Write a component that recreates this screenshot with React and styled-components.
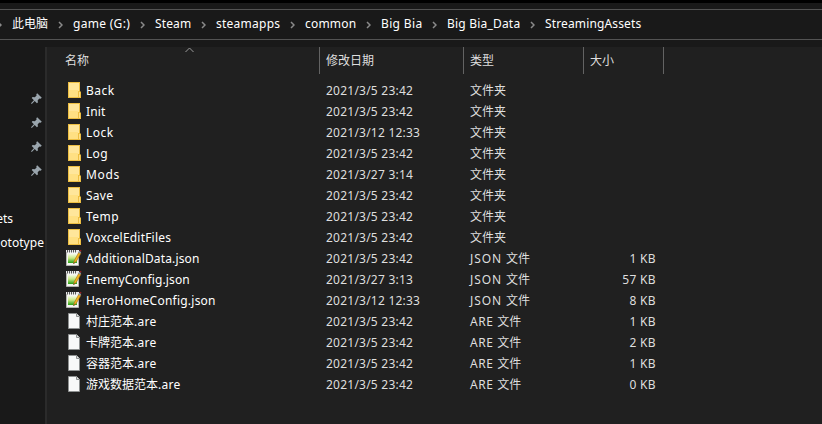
import React from 'react';
import styled, { createGlobalStyle } from 'styled-components';

const GlobalStyle = createGlobalStyle`
  * { box-sizing: border-box; }
  body {
    margin: 0;
    background: #191919;
    overflow: hidden;
    font-family: "Noto Sans", "Noto Sans CJK SC", sans-serif;
    font-size: 12px;
    color: #fff;
  }
`;

const Window = styled.div`
  width: 822px;
  height: 424px;
  display: flex;
  flex-direction: column;
  border-top: 3px solid #000;
  background: #191919;
  overflow: hidden;
  white-space: nowrap;
`;

const AddressBar = styled.nav`
  height: 31px;
  margin-top: 6px;
  flex: none;
  display: flex;
  align-items: center;
  padding-bottom: 1px;
  border: solid #535353;
  border-width: 1px 0;
`;

const Crumb = styled.span`
  width: ${(p) => p.$width}px;
  line-height: 20px;
  letter-spacing: ${(p) => p.$spacing || 0}px;
  flex: none;
`;

const Separator = styled.svg`
  width: 5px;
  height: 8px;
  flex: none;
  margin: 1px 10px 0;
  fill: none;
  stroke: #8a8a8a;
  stroke-width: 1.5;
  &:first-child { margin: 1px 10px 0 -3px; }
`;

const Body = styled.div`
  flex: 1;
  min-height: 0;
  margin-top: 7px;
  display: flex;
`;

const Sidebar = styled.aside`
  width: 45px;
  flex: none;
  padding-top: 39px;
  overflow: hidden;
`;

const SideItem = styled.div`
  height: 24px;
  display: flex;
  align-items: center;
  justify-content: flex-end;
  padding-right: ${(p) => p.$inset || 0}px;
  letter-spacing: ${(p) => p.$spacing || 0}px;
  svg { display: block; }
`;

const SideGroup = styled.div`
  margin-top: 24px;
`;

const Listing = styled.main`
  flex: 1;
  background: #202020;
  border-left: 2px solid #2b2b2b;
`;

const columns = '273px 144px 120px 80px';

const Header = styled.div`
  display: grid;
  grid-template-columns: ${columns};
  height: 27px;
`;

const Heading = styled.div`
  position: relative;
  display: flex;
  align-items: center;
  padding-left: ${(p) => p.$inset}px;
  border-right: 1px solid #636363;
  color: #dedede;
  line-height: 20px;
`;

const SortMark = styled.svg`
  position: absolute;
  left: 138px;
  top: 0;
  fill: none;
  stroke: #9b9b9b;
`;

const Rows = styled.div`
  padding-top: 6px;
`;

const Row = styled.div`
  display: grid;
  grid-template-columns: ${columns};
  height: 21px;
  align-items: center;
  color: #dedede;
  line-height: 20px;
`;

const Name = styled.div`
  display: grid;
  grid-template-columns: 21px auto;
  padding-left: 18px;
  align-items: center;
  justify-content: start;
  color: #fff;
  letter-spacing: ${(p) => p.$spacing}px;
  svg { display: block; margin-bottom: 2px; }
`;

const Cell = styled.div`
  padding-left: 6px;
  letter-spacing: ${(p) => p.$spacing || 0}px;
`;

const Size = styled.div`
  text-align: right;
  padding-right: 8px;
  letter-spacing: 0.35px;
`;

const Latin = styled.span`
  letter-spacing: ${(p) => p.$spacing}px;
`;

const FolderIcon = () => (
  <svg width="18" height="18" viewBox="0 0 18 18">
    <path d="M3 1h12v9.5h1V17H3z" fill="#eebf43" />
    <path d="M4 2h10v8h-1v6H4z" fill="#ffe69b" />
    <path d="M4 9h9v7H4z" fill="#ffe083" />
    <path d="M14 11h1v5h-1z" fill="#ffe18a" />
  </svg>
);

const FileIcon = () => (
  <svg width="18" height="18" viewBox="0 0 18 18">
    <path d="M3.5 1.5h8l3 3v12h-11z" fill="#f8f9f9" stroke="#8e9191" />
    <path d="M11.5 1.5v3h3" fill="#dfe1e1" stroke="#8e9191" />
  </svg>
);

const NotepadIcon = () => (
  <svg width="18" height="18" viewBox="0 0 18 18">
    <defs>
      <linearGradient id="page" x1="0" y1="0" x2="0" y2="1">
        <stop offset="0" stopColor="#f4fbe6" />
        <stop offset=".45" stopColor="#c9e885" />
        <stop offset="1" stopColor="#27a015" />
      </linearGradient>
    </defs>
    <path d="M1.5 2.5h12v14h-12z" fill="#f5f5f2" stroke="#b4b4b0" />
    <path d="M3 5h9v9H3z" fill="url(#page)" />
    <path d="M1 2h13" stroke="#e8e8e8" strokeWidth="2" />
    <path d="M2.5 1v2.5M4.5 1v2.5M6.5 1v2.5M8.5 1v2.5M10.5 1v2.5" stroke="#575757" />
    <path d="M8.5 14.5l1-3.2 4.3-8 2 1.2-4.5 7.8z" fill="#f4b51e" stroke="#a36a13" strokeWidth=".6" />
    <path d="M9 13.5l-.6 1.5 1.6-1z" fill="#33291a" />
    <path d="M13.2 3.5l1-1.7 2 1.2-1 1.7z" fill="#8f9ba3" />
    <path d="M14.4 1.6l.6-.9 1.5.9-.5 1.2z" fill="#a51b20" />
  </svg>
);

const PinIcon = () => (
  <svg width="11" height="11" viewBox="0 0 11 11">
    <path d="M6.2.2l4.6 4.6-1.2.9-1.1-.2-1.8 1.8.2 2.2-1 .8-2.2-2.2L.8 11 0 10.2l2.9-2.9L.7 5.1l.9-1 2.2.2 1.8-1.8-.3-1.3z" fill="#9aa5ad" />
  </svg>
);

const icons = { folder: FolderIcon, json: NotepadIcon, are: FileIcon };

const crumbs = [
  ['此电脑', 36, 0],
  ['game (G:)', 57, 0.3],
  ['Steam', 36, 0.12],
  ['steamapps', 64, 0.25],
  ['common', 51, 0.2],
  ['Big Bia', 41, 0.35],
  ['Big Bia_Data', 73, 0.2],
  ['StreamingAssets', 96, 0.14],
];

const files = [
  ['folder', 'Back', '', '2021/3/5 23:42', '', 0.5],
  ['folder', 'Init', '', '2021/3/5 23:42', '', 0.1],
  ['folder', 'Lock', '', '2021/3/12 12:33', '', 0.5],
  ['folder', 'Log', '', '2021/3/5 23:42', '', 0.3],
  ['folder', 'Mods', '', '2021/3/27 3:14', '', 0.7],
  ['folder', 'Save', '', '2021/3/5 23:42', '', 0.25],
  ['folder', 'Temp', '', '2021/3/5 23:42', '', 0.5],
  ['folder', 'VoxcelEditFiles', '', '2021/3/5 23:42', '', 0.2],
  ['json', 'AdditionalData.json', '', '2021/3/5 23:42', '1 KB', 0.15],
  ['json', 'EnemyConfig.json', '', '2021/3/27 3:13', '57 KB', 0.13],
  ['json', 'HeroHomeConfig.json', '', '2021/3/12 12:33', '8 KB', 0.23],
  ['are', '村庄范本', '.are', '2021/3/5 23:42', '1 KB', 0],
  ['are', '卡牌范本', '.are', '2021/3/5 23:42', '2 KB', 0],
  ['are', '容器范本', '.are', '2021/3/5 23:42', '1 KB', 0],
  ['are', '游戏数据范本', '.are', '2021/3/5 23:42', '0 KB', 0],
];

const Chevron = () => (
  <Separator viewBox="0 0 5 8">
    <path d="M1 1l3 3-3 3" />
  </Separator>
);

function FileRow({ file: [kind, name, ext, date, size, spacing] }) {
  const Icon = icons[kind];
  return (
    <Row>
      <Name $spacing={spacing}>
        <Icon />
        <span>{name}{ext && <Latin $spacing={0.3}>{ext}</Latin>}</span>
      </Name>
      <Cell $spacing={0.23}>{date}</Cell>
      <Cell>
        {kind === 'folder' ? '文件夹' : (
          <><Latin $spacing={kind === 'json' ? 0.9 : 0.6}>{kind.toUpperCase()} </Latin>文件</>
        )}
      </Cell>
      <Size>{size}</Size>
    </Row>
  );
}

export default function App() {
  return (
    <Window>
      <GlobalStyle />
      <AddressBar>
        <Chevron />
        {crumbs.map(([label, width, spacing], i) => (
          <React.Fragment key={label}>
            {i > 0 && <Chevron />}
            <Crumb $width={width} $spacing={spacing}>{label}</Crumb>
          </React.Fragment>
        ))}
      </AddressBar>
      <Body>
        <Sidebar>
          {[0, 1, 2, 3].map((i) => (
            <SideItem key={i} $inset={3}><PinIcon /></SideItem>
          ))}
          <SideGroup>
            <SideItem $inset={32}>ets</SideItem>
            <SideItem $inset={1} $spacing={0.05}>ototype</SideItem>
          </SideGroup>
        </Sidebar>
        <Listing>
          <Header>
            <Heading $inset={18}>
              名称
              <SortMark width="9" height="6" viewBox="0 0 9 6"><path d="M.5 5l4-4 4 4" /></SortMark>
            </Heading>
            <Heading $inset={6}>修改日期</Heading>
            <Heading $inset={6}>类型</Heading>
            <Heading $inset={6}>大小</Heading>
          </Header>
          <Rows>
            {files.map((file) => <FileRow key={file[1]} file={file} />)}
          </Rows>
        </Listing>
      </Body>
    </Window>
  );
}
